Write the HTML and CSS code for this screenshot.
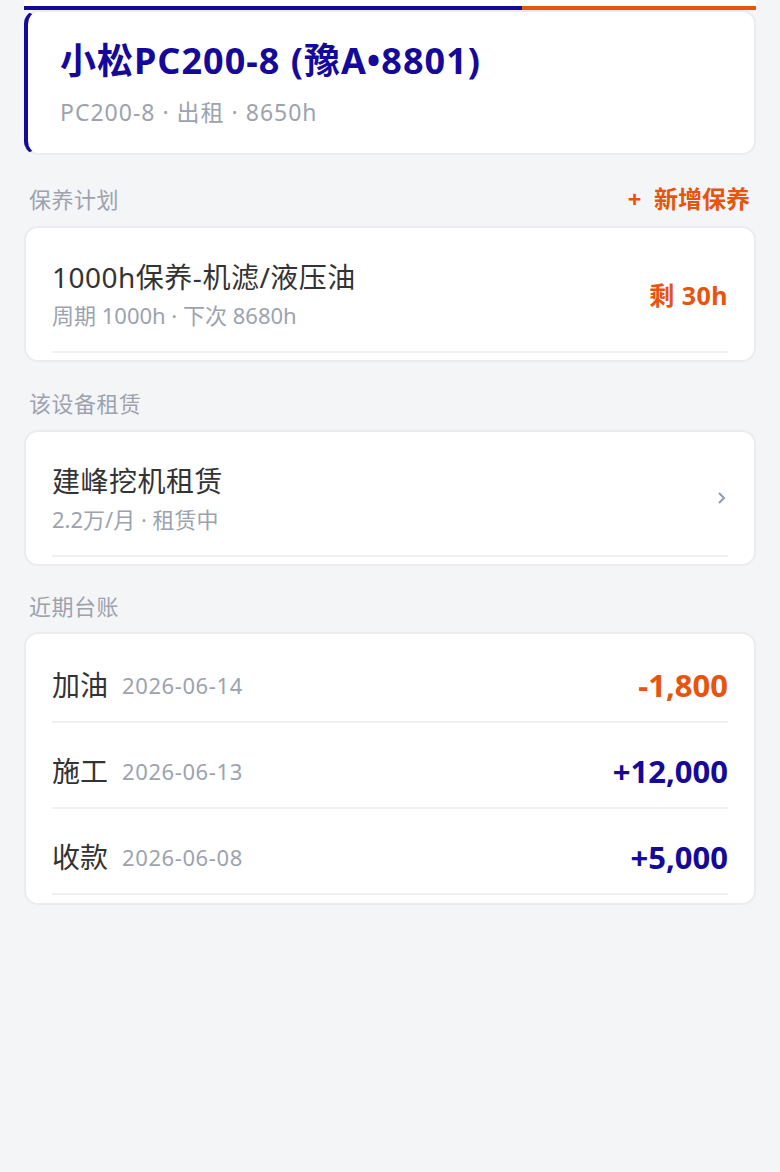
FILE: index.html
```html
<!DOCTYPE html>
<html lang="zh-CN">
<head>
<meta charset="UTF-8" />
<meta name="viewport" content="width=device-width, initial-scale=1" />
<title>设备详情</title>
<link rel="stylesheet" href="styles.css">
</head>
<body>

<div class="page">

  <div class="top-strip">
    <div class="progress"><div class="progress-fill"></div></div>
  </div>

  <div class="card hero">
    <h1 class="hero-title">小松PC200-8 (豫A•8801)</h1>
    <div class="hero-sub">PC200-8 · 出租 · 8650h</div>
  </div>

  <div class="section-head first">
    <span class="section-title">保养计划</span>
    <button class="add-btn">+&nbsp; 新增保养</button>
  </div>
  <div class="card list">
    <div class="item">
      <div class="item-main">
        <div class="item-title">1000h保养-机滤/液压油</div>
        <div class="item-sub">周期 1000h · 下次 8680h</div>
      </div>
      <div class="remain">剩 30h</div>
    </div>
  </div>

  <div class="section-head">
    <span class="section-title">该设备租赁</span>
  </div>
  <div class="card list">
    <div class="item">
      <div class="item-main">
        <div class="item-title">建峰挖机租赁</div>
        <div class="item-sub">2.2万/月 · 租赁中</div>
      </div>
      <svg class="chevron" width="10" height="14" viewBox="0 0 10 14">
        <polyline points="2,2 7,7 2,12" fill="none" stroke="#8e9bb3" stroke-width="2" />
      </svg>
    </div>
  </div>

  <div class="section-head last">
    <span class="section-title">近期台账</span>
  </div>
  <div class="card list ledger">
    <div class="row">
      <span class="row-name">加油</span>
      <span class="row-date">2026-06-14</span>
      <span class="amount out">-1,800</span>
    </div>
    <div class="row">
      <span class="row-name">施工</span>
      <span class="row-date">2026-06-13</span>
      <span class="amount in">+12,000</span>
    </div>
    <div class="row">
      <span class="row-name">收款</span>
      <span class="row-date">2026-06-08</span>
      <span class="amount in">+5,000</span>
    </div>
  </div>

</div>

</body>
</html>
```

FILE: styles.css
```css
body {
  margin: 0;
  padding: 0;
  background: #f4f5f7;
  font-family: "Noto Sans", "Noto Sans CJK SC", sans-serif;
  color: #333;
}
.page {
  padding: 0 24px 40px;
}
.top-strip {
  background: #fff;
  padding-top: 6px;
}
.progress {
  height: 4px;
  background: #e8530e;
}
.progress-fill {
  width: 68%;
  height: 100%;
  background: #15099a;
}
.card {
  background: #fff;
  border: 2px solid #ececef;
  border-radius: 14px;
}
.hero {
  border-left: 4px solid #15099a;
  padding: 27px 32px 26px;
}
.hero-title {
  margin: 0;
  font-size: 36px;
  line-height: 44px;
  font-weight: bold;
  letter-spacing: 1px;
  color: #15099a;
}
.hero-sub {
  margin-top: 14px;
  font-size: 23px;
  line-height: 30px;
  letter-spacing: 1px;
  color: #9ca3af;
}
.section-head {
  display: flex;
  justify-content: space-between;
  align-items: center;
  padding: 26px 6px 0 5px;
  margin-bottom: 12px;
  height: 30px;
}
.section-head.first {
  padding-top: 29px;
}
.section-head.last {
  padding-top: 25px;
  margin-bottom: 11px;
}
.section-title {
  font-size: 22px;
  line-height: 30px;
  letter-spacing: 0.5px;
  color: #9ca3af;
}
.add-btn {
  background: none;
  border: none;
  padding: 0;
  font-family: inherit;
  font-size: 24px;
  line-height: 30px;
  font-weight: bold;
  color: #e8530e;
  cursor: pointer;
}
.list {
  padding: 3px 26px 7px;
}
.list.ledger {
  padding-bottom: 8px;
}
.item {
  display: flex;
  align-items: center;
  justify-content: space-between;
  padding: 28px 0 22px;
  border-bottom: 2px solid #f0f0f2;
}
.item-title {
  font-size: 28px;
  line-height: 36px;
  letter-spacing: 0.5px;
  color: #333;
}
.item-sub {
  margin-top: 6px;
  font-size: 22px;
  line-height: 28px;
  color: #9ca3af;
}
.remain {
  font-size: 25px;
  font-weight: bold;
  letter-spacing: 0.5px;
  color: #e8530e;
}
.chevron {
  margin-right: 1px;
}
.row {
  display: flex;
  align-items: center;
  padding: 30px 0 18px;
  line-height: 36px;
  border-bottom: 2px solid #f0f0f2;
}
.row-name {
  font-size: 28px;
  color: #333;
}
.row-date {
  margin-left: 14px;
  font-size: 22px;
  letter-spacing: 0.6px;
  color: #9ca3af;
}
.amount {
  margin-left: auto;
  font-size: 31px;
  font-weight: bold;
}
.amount.out {
  color: #e8530e;
}
.amount.in {
  color: #15099a;
}
```
